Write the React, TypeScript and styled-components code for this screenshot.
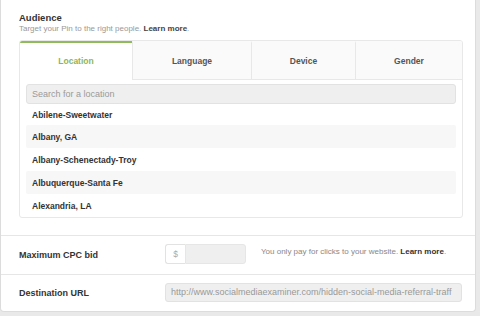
import React from "react";
import styled, { createGlobalStyle } from "styled-components";

const Global = createGlobalStyle`
  html, body { margin: 0; padding: 0; background: #e9e9e9; }
  body { font-family: "Liberation Sans", Arial, Helvetica, sans-serif; width: 480px; height: 316px; overflow: hidden; }
  * { box-sizing: border-box; }
`;

const Panel = styled.div`
  width: 476px;
  height: 312px;
  background: #fff;
  border: 1px solid #dcdcdc;
  border-top: none;
  border-radius: 0 0 4px 4px;
  display: flex;
  flex-direction: column;
`;

const Section = styled.section`
  padding: 12px 12px 17px 18px;
  border-bottom: 1px solid #e6e6e6;
`;

const Title = styled.h2`
  margin: 0;
  font-size: 9.5px;
  line-height: 12px;
  font-weight: bold;
  color: #333;
`;

const Sub = styled.p`
  margin: 0;
  font-size: 8px;
  line-height: 10px;
  color: #999;
  & b { color: #444; font-weight: bold; }
`;

const TabBox = styled.div`
  margin-top: 6px;
  border: 1px solid #e8e8e8;
  border-radius: 3px;
  overflow: hidden;
`;

const TabRow = styled.div`
  display: grid;
  grid-template-columns: 112px 119px 104px 1fr;
  height: 39px;
`;

const Tab = styled.div<{ $active?: boolean }>`
  display: flex;
  align-items: center;
  justify-content: center;
  font-size: 8.5px;
  font-weight: bold;
  color: ${(p) => (p.$active ? "#8cb65b" : "#555")};
  background: ${(p) => (p.$active ? "#fff" : "#fafafa")};
  border-top: 2px solid ${(p) => (p.$active ? "#8fbb5c" : "transparent")};
  border-bottom: 1px solid ${(p) => (p.$active ? "transparent" : "#e8e8e8")};
  & + & { border-left: 1px solid #e8e8e8; }
`;

const TabBody = styled.div`
  padding: 4px 6px 0;
`;

const Search = styled.input`
  display: block;
  width: 100%;
  height: 20px;
  border: 1px solid #e2e2e2;
  border-radius: 3px;
  background: #efefef;
  padding: 0 5px;
  font-family: inherit;
  font-size: 9px;
  color: #333;
  outline: none;
  &::placeholder { color: #9a9a9a; }
`;

const Row = styled.div<{ $alt?: boolean }>`
  height: 23px;
  display: flex;
  align-items: center;
  padding-left: 6px;
  font-size: 8.5px;
  font-weight: bold;
  color: #333;
  border-radius: 2px;
  background: ${(p) => (p.$alt ? "#f7f7f7" : "#fff")};
  &:first-child { height: 21px; }
`;

const FieldRow = styled.div<{ $h: number }>`
  display: flex;
  align-items: center;
  height: ${(p) => p.$h}px;
  padding-left: 18px;
  & + & { border-top: 1px solid #e6e6e6; }
`;

const Label = styled.div`
  width: 146px;
  font-size: 9px;
  font-weight: bold;
  color: #333;
`;

const Money = styled.div`
  display: flex;
  height: 20px;
  margin-top: -1px;
`;

const Addon = styled.span`
  width: 20px;
  display: flex;
  align-items: center;
  justify-content: center;
  border: 1px solid #e2e2e2;
  border-right: none;
  border-radius: 3px 0 0 3px;
  background: #fff;
  color: #aaa;
  font-size: 8.5px;
`;

const BidInput = styled.div`
  width: 61px;
  background: #efefef;
  border: 1px solid #e6e6e6;
  border-radius: 0 3px 3px 0;
`;

const Help = styled.div`
  margin-left: 15px;
  margin-top: -7px;
  font-size: 8px;
  color: #888;
  & b { color: #333; font-weight: bold; }
`;

const UrlInput = styled.div`
  width: 297px;
  height: 19px;
  margin-top: -1px;
  display: flex;
  align-items: center;
  padding-left: 5px;
  background: #efefef;
  border: 1px solid #e2e2e2;
  border-radius: 3px;
  font-size: 9px;
  color: #999;
  white-space: nowrap;
  overflow: hidden;
`;

const tabs = ["Location", "Language", "Device", "Gender"];
const locations = [
  "Abilene-Sweetwater",
  "Albany, GA",
  "Albany-Schenectady-Troy",
  "Albuquerque-Santa Fe",
  "Alexandria, LA",
];

export default function App() {
  return (
    <>
      <Global />
      <Panel>
        <Section>
          <Title>Audience</Title>
          <Sub>
            Target your Pin to the right people. <b>Learn more</b>.
          </Sub>
          <TabBox>
            <TabRow>
              {tabs.map((t, i) => (
                <Tab key={t} $active={i === 0}>
                  {t}
                </Tab>
              ))}
            </TabRow>
            <TabBody>
              <Search placeholder="Search for a location" />
              <div>
                {locations.map((l, i) => (
                  <Row key={l} $alt={i % 2 === 1}>
                    {l}
                  </Row>
                ))}
              </div>
            </TabBody>
          </TabBox>
        </Section>
        <FieldRow $h={38}>
          <Label>Maximum CPC bid</Label>
          <Money>
            <Addon>$</Addon>
            <BidInput />
          </Money>
          <Help>
            You only pay for clicks to your website. <b>Learn more</b>.
          </Help>
        </FieldRow>
        <FieldRow $h={38}>
          <Label>Destination URL</Label>
          <UrlInput>http://www.socialmediaexaminer.com/hidden-social-media-referral-traff</UrlInput>
        </FieldRow>
      </Panel>
    </>
  );
}
